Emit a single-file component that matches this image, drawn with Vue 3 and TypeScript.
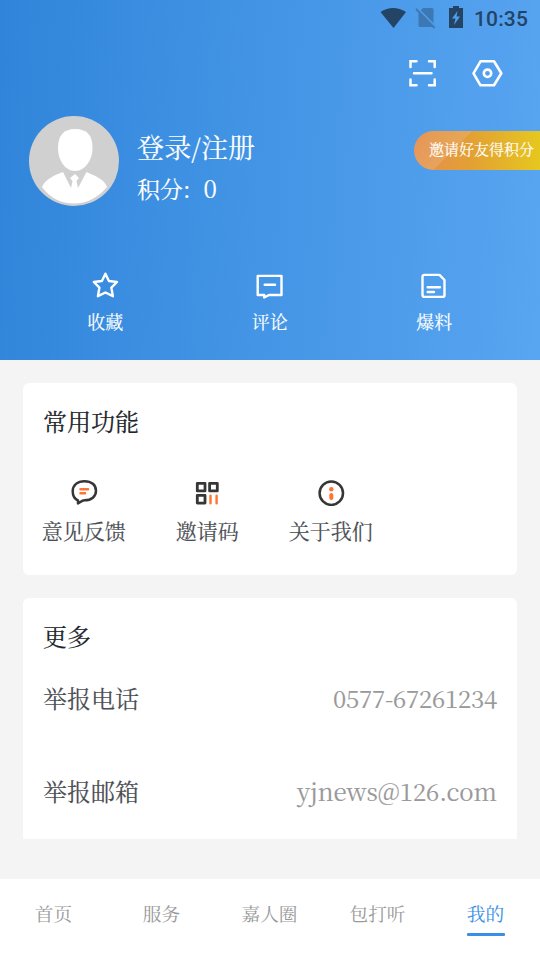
<script setup lang="ts">
interface Entry { id: string; label: string }

const stats: Entry[] = [
  { id: 'favorite', label: '收藏' },
  { id: 'comment', label: '评论' },
  { id: 'tips', label: '爆料' },
]
const tools: Entry[] = [
  { id: 'feedback', label: '意见反馈' },
  { id: 'invite', label: '邀请码' },
  { id: 'about', label: '关于我们' },
]
const contacts = [
  { label: '举报电话', value: '0577-67261234', kind: 'phone' },
  { label: '举报邮箱', value: 'yjnews@126.com', kind: 'mail' },
]
const tabs: string[] = ['首页', '服务', '嘉人圈', '包打听', '我的']
const activeTab = '我的'
</script>

<template>
  <div class="screen">
    <header class="hero">
      <div class="status">
        <svg class="wifi" width="28" height="22" viewBox="0 0 28 22"><path d="M1.500 5Q14-3 27 5L14.500 21Z" fill="#234465" /></svg>
        <svg class="sim" width="22" height="22" viewBox="0 0 22 22"><path d="M8 1H17Q18.500 1 18.500 2.500V18.500Q18.500 20 17 20H5Q3.500 20 3.500 18.500V6Z" fill="#3c78b4" /><path d="M2 1L21 20" stroke="#4e9bea" stroke-width="2" /><path d="M1 2L19.500 21" stroke="#3c78b4" stroke-width="1.800" /></svg>
        <svg class="battery" width="14" height="22" viewBox="0 0 14 22"><path d="M4 0H10V2H14V22H0V2H4Z" fill="#234465" /><path d="M8.500 5L3 12.500H6.500L5 19L11 10.500H7.500Z" fill="#529eec" /></svg>
        <span class="time">10:35</span>
      </div>

      <div class="actions">
        <svg width="28" height="28" viewBox="0 0 28 28" fill="none" stroke="#fff" stroke-width="2.500" stroke-linecap="round">
          <path d="M1.500 8V2.300H7.500M20 2.300H25.700V8M25.700 20.500V26.300H20M7.500 26.300H1.500V20.500M5 14.300H22.500" />
        </svg>
        <svg width="32" height="28" viewBox="0 0 32 28" fill="none" stroke="#fff" stroke-width="2.600" stroke-linejoin="round">
          <path d="M9.500 2.300H23L30.300 14.300L23 26.300H9.500L2.500 14.300Z" /><circle cx="16.500" cy="14.300" r="3.700" />
        </svg>
      </div>

      <div class="profile">
        <svg class="avatar" width="90" height="90" viewBox="0 0 90 90">
          <circle cx="45" cy="45" r="45" fill="#d0d0d0" />
          <path d="M46 13C58 13 63.500 19 63.500 32C63.500 44 56 55 46 55C36 55 29 44 29 32C29 19 35 13 46 13Z" fill="#fff" />
          <path d="M34 56L42 72L43.500 65L41 62L46 58L50 62L47.500 65L49 72L57.500 56C68 61 75 63 78 71Q64 87.500 45 87.500Q25 87.500 13 71C16 64 23 60 34 56Z" fill="#fff" />
        </svg>
        <div class="account">
          <div class="login">登录/注册</div>
          <div class="points">积分:<span class="score">0</span></div>
        </div>
        <div class="reward">邀请好友得积分</div>
      </div>

      <nav class="stats">
        <div v-for="item in stats" :key="item.id" class="stat">
          <svg width="28" height="28" viewBox="0 0 28 28" fill="none" stroke="#fff" stroke-width="2.400" stroke-linejoin="round" stroke-linecap="round">
            <path v-if="item.id === 'favorite'" d="M14.400 1.700L17.900 9L26 10L20.400 15.700L21.900 24.200L14.400 20.500L6.900 24.200L8.400 15.700L2.800 10L10.900 9Z" />
            <template v-else-if="item.id === 'comment'">
              <path d="M1.700 3.900H25.500V23H13L8.200 25.500V23H1.700Z" /><path d="M8.700 12.700H19" />
            </template>
            <template v-else>
              <path d="M4.500 2.900H19.500L24.500 8V22.900Q24.500 24.900 22.500 24.900H4.500Q2.500 24.900 2.500 22.900V4.900Q2.500 2.900 4.500 2.900Z" /><path d="M7.700 15.200H20M7.700 20H14" />
            </template>
          </svg>
          <span>{{ item.label }}</span>
        </div>
      </nav>
    </header>

    <main class="content">
      <section class="card tools-card">
        <h2>常用功能</h2>
        <div class="tools">
          <div v-for="item in tools" :key="item.id" class="tool">
            <svg width="28" height="28" viewBox="0 0 28 28" fill="none">
              <template v-if="item.id === 'feedback'">
                <path d="M8 22.500C4.500 21 2.700 17.500 2.700 13.300C2.700 7 7.500 3.200 14.500 3.200C21.500 3.200 26 7 26 12.800C26 18.500 21.500 22.300 14.500 22.300C12 22.300 10 24.500 8 25.500Z" stroke="#363636" stroke-width="2.500" stroke-linejoin="round" />
                <path d="M10.500 11.300H18M10.500 15.300H15" stroke="#ff7333" stroke-width="2.500" stroke-linecap="round" />
              </template>
              <template v-else-if="item.id === 'invite'">
                <path d="M4.300 5.300H12V12.900H4.300ZM16.600 5.300H24.300V12.900H16.600ZM4.300 17.300H12V25.100H4.300Z" stroke="#363636" stroke-width="2.800" stroke-linejoin="round" />
                <path d="M17.500 17.800V25.300M23.600 17.800V25.300" stroke="#ff7333" stroke-width="2.400" stroke-linecap="round" />
              </template>
              <template v-else>
                <circle cx="14.300" cy="15.200" r="11.700" stroke="#363636" stroke-width="2.500" />
                <circle cx="14.300" cy="11.300" r="2.200" fill="#ff7333" />
                <path d="M14.300 17V20" stroke="#ff7333" stroke-width="4" stroke-linecap="round" />
              </template>
            </svg>
            <span>{{ item.label }}</span>
          </div>
        </div>
      </section>

      <section class="card more-card">
        <h2>更多</h2>
        <div v-for="row in contacts" :key="row.label" class="row">
          <span>{{ row.label }}</span>
          <span class="value" :class="row.kind">{{ row.value }}</span>
        </div>
      </section>
    </main>

    <footer class="tabs">
      <div v-for="tab in tabs" :key="tab" class="tab" :class="{ active: tab === activeTab }">
        <span>{{ tab }}</span>
      </div>
    </footer>
  </div>
</template>

<style>
body { margin: 0; }
</style>

<style scoped>
.screen {
  width: 540px; height: 960px; overflow: hidden; background: #f4f4f4;
  display: flex; flex-direction: column; box-sizing: border-box; white-space: nowrap;
  font-family: "Noto Serif CJK SC", "Source Han Serif SC", "Noto Serif SC", "Liberation Serif", "Noto Sans CJK SC", serif;
  -webkit-text-stroke: .15px currentColor;
}
.screen svg { display: block; flex: none; }
.hero {
  height: 360px; flex: none; color: #fff; display: flex; flex-direction: column;
  background: linear-gradient(94deg, #3085da 0%, #58a5f1 100%);
}
.status { height: 37px; display: flex; align-items: center; padding: 0 12px 0 379px; box-sizing: border-box; }
.wifi { margin-top: -2px; }
.sim { margin: -1px 0 0 8px; }
.battery { margin: -3px 0 0 12px; }
.time { margin-left: 11px; color: #234465; font: 500 21px/37px Roboto, sans-serif; padding-top: 1px; letter-spacing: .15px; -webkit-text-stroke: 0; }
.actions { height: 72px; display: flex; justify-content: flex-end; align-items: center; gap: 34px; padding-right: 37px; }
.profile { height: 90px; margin-top: 7px; padding-left: 29px; display: flex; }
.account { margin-left: 18px; padding-top: 11px; }
.login { font-size: 27px; line-height: 40px; letter-spacing: .15px; }
.points { font-size: 23px; line-height: 36px; margin-top: 3px; }
.score { margin-left: 13px; font-size: 24px; }
.reward {
  margin: 15px 0 0 auto; width: 126px; height: 39px; box-sizing: border-box; padding-left: 15px;
  border-radius: 20px 0 0 20px; font-size: 15px; line-height: 35px;
  background: linear-gradient(135deg, rgba(230, 170, 118, .15) 0%, rgba(233, 172, 108, .6) 35%, transparent 35.500%), linear-gradient(90deg, #e58f52, #e3a034 45%, #e6c71f);
}
.stats { margin-top: 66px; padding: 0 23.500px 0 23px; display: flex; }
.stat { flex: 1; display: flex; flex-direction: column; align-items: center; font-size: 18px; line-height: 26px; }
.stat span { margin-top: 8px; }
.content { height: 519px; flex: none; padding: 23px 23px 0; box-sizing: border-box; }
.card { background: #fff; border-radius: 6px; box-sizing: border-box; padding: 19px 20px 0; }
.tools-card { height: 192px; }
.card h2 { margin: 0; font-size: 24px; line-height: 38px; font-weight: 400; color: #222529; -webkit-text-stroke: .2px currentColor; }
.tools { display: flex; margin-top: 38px; }
.tool { width: 123.500px; margin-left: -21px; margin-right: 21px; display: flex; flex-direction: column; align-items: center; font-size: 21px; line-height: 32px; color: #4b4e53; }
.tool span { margin-top: 8px; }
.more-card { height: 241px; margin-top: 23px; border-radius: 6px 6px 0 0; }
.row { height: 93px; box-sizing: border-box; padding-top: 24px; display: flex; justify-content: space-between; font-size: 24px; line-height: 38px; color: #4b4e53; }
.value { color: #999; }
.phone { letter-spacing: -.2px; }
.tabs { height: 81px; flex: none; background: #fff; display: flex; }
.tab { flex: 1; display: flex; flex-direction: column; align-items: center; padding-top: 19px; font-size: 18.700px; line-height: 29px; color: #999; -webkit-text-stroke: 0; }
.tab span { margin-right: 1px; }
.active { color: #398fe6; }
.active::after { content: ""; width: 38px; height: 3px; margin-top: 6px; border-radius: 1px; background: #398fe6; }
</style>
